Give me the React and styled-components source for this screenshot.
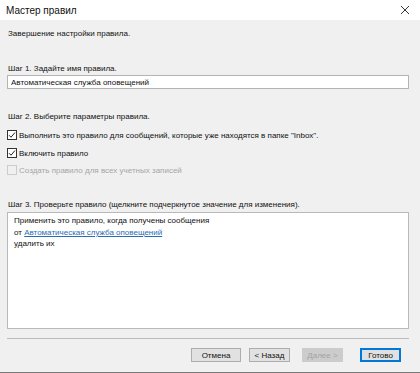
import React from 'react';
import styled, { createGlobalStyle } from 'styled-components';

const GlobalStyle = createGlobalStyle`
html, body {
  margin: 0;
  padding: 0;
  background: #f0f0f0;
}
* {
  box-sizing: border-box;
}
`;

const Window = styled.div`
width: 420px;
height: 373px;
display: flex;
flex-direction: column;
font-family: "Liberation Sans", Arial, sans-serif;
font-size: 8px;
color: #111111;
background: #f0f0f0;
border-bottom: 1px solid #7a7a7a;
overflow: hidden;
`;

const TitleBar = styled.div`
height: 20px;
flex-shrink: 0;
display: flex;
align-items: center;
justify-content: space-between;
padding: 0 9px 0 6px;
background: #ffffff;
font-size: 10px;
`;

const CloseButton = styled.button`
border: none;
background: none;
padding: 0;
width: 12px;
height: 12px;
display: flex;
align-items: center;
justify-content: center;
`;

const Body = styled.div`
flex: 1;
display: flex;
flex-direction: column;
padding: 0 11px 0 7px;
`;

const Line = styled.div`
height: 12px;
line-height: 12px;
white-space: nowrap;
margin-top: ${(p) => p.gap || 0}px;
padding-left: 1px;
`;

const TextInput = styled.input`
height: 14px;
width: 100%;
border: 1px solid #b4b4b4;
background: #ffffff;
font: inherit;
padding: 0 3px;
outline: none;
color: #111111;
`;

const CheckRow = styled.label`
display: flex;
align-items: center;
gap: 2px;
height: 12px;
margin-top: ${(p) => p.gap}px;
color: ${(p) => (p.disabled ? '#a6a6a6' : '#111111')};
white-space: nowrap;
`;

const Box = styled.span`
width: 10px;
height: 10px;
flex-shrink: 0;
border: 1px solid ${(p) => (p.disabled ? '#cccccc' : '#333333')};
background: ${(p) => (p.disabled ? '#f0f0f0' : '#ffffff')};
display: flex;
align-items: center;
justify-content: center;
`;

const Summary = styled.div`
margin-top: 1px;
height: 117px;
border: 1px solid #b9b9b9;
background: #ffffff;
padding: 2px 6px;
line-height: 11.5px;
`;

const Link = styled.a`
color: #2a6cb3;
text-decoration: underline;
`;

const Separator = styled.div`
margin-top: 9px;
height: 1px;
background: #bdbdbd;
`;

const Buttons = styled.div`
display: flex;
justify-content: flex-end;
align-items: center;
margin-top: 9px;
padding-right: 8px;
`;

const Button = styled.button`
width: ${(p) => p.w || 41}px;
height: 14px;
margin-left: ${(p) => p.gap || 0}px;
padding: 0;
font-family: inherit;
font-weight: 400;
font-size: 8px;
color: ${(p) => (p.disabled ? '#a3a3a3' : '#111111')};
background: ${(p) => (p.disabled ? '#cccccc' : '#e1e1e1')};
border: 1px solid ${(p) => {
    if (p.primary) return '#0078d7';
    if (p.disabled) return '#cccccc';
    return '#adadad';
  }};
box-shadow: ${(p) => (p.primary ? 'inset 0 0 0 1px #0078d7' : 'none')};
`;

function CheckMark() {
  return (
    <svg width="8" height="8" viewBox="0 0 8 8">
      <polyline points="1,4.2 3,6.2 7,1.5" fill="none" stroke="#222" strokeWidth="1" />
    </svg>
  );
}

function Check({ checked, disabled, gap, children }) {
  return (
    <CheckRow gap={gap} disabled={disabled}>
      <Box disabled={disabled}>{checked && <CheckMark />}</Box>
      {children}
    </CheckRow>
  );
}

export default function App() {
  return (
    <Window>
      <GlobalStyle />
      <TitleBar>
        Мастер правил
        <CloseButton type="button">
          <svg width="10" height="10" viewBox="0 0 10 10">
            <path d="M1 1 L9 9 M9 1 L1 9" stroke="#333" strokeWidth="1" />
          </svg>
        </CloseButton>
      </TitleBar>
      <Body>
        <Line gap={8}>Завершение настройки правила.</Line>
        <Line gap={23}>Шаг 1. Задайте имя правила.</Line>
        <TextInput defaultValue="Автоматическая служба оповещений" />
        <Line gap={22}>Шаг 2. Выберите параметры правила.</Line>
        <Check checked gap={6}>Выполнить это правило для сообщений, которые уже находятся в папке "Inbox".</Check>
        <Check checked gap={6}>Включить правило</Check>
        <Check disabled gap={5}>Создать правило для всех учетных записей</Check>
        <Line gap={23}>Шаг 3. Проверьте правило (щелкните подчеркнутое значение для изменения).</Line>
        <Summary>
          <div>Применить это правило, когда получены сообщения</div>
          <div>
            от <Link href="#">Автоматическая служба оповещений</Link>
          </div>
          <div>удалить их</div>
        </Summary>
        <Separator />
        <Buttons>
          <Button type="button" w={50}>Отмена</Button>
          <Button type="button" gap={8}>&lt; Назад</Button>
          <Button type="button" disabled gap={12}>Далее &gt;</Button>
          <Button type="button" primary gap={17}>Готово</Button>
        </Buttons>
      </Body>
    </Window>
  );
}
